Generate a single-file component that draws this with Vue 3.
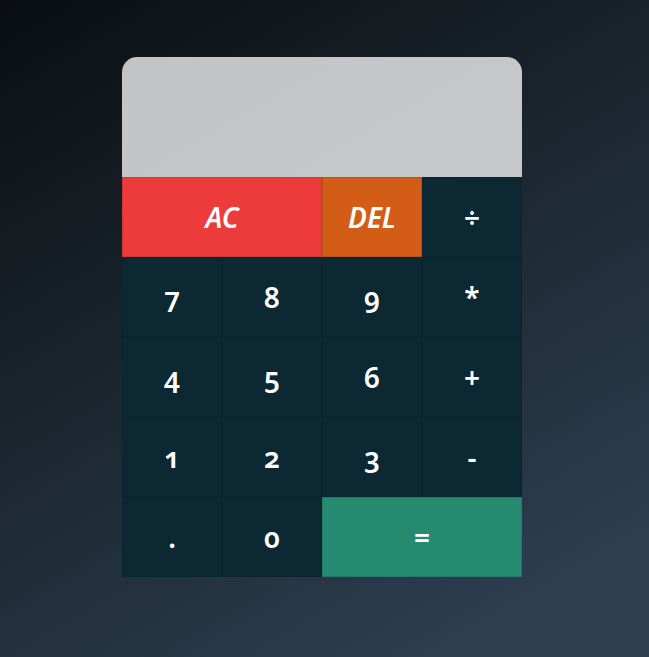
<script setup>
import { ref } from 'vue'

const keys = [
  { label: 'AC', kind: 'clear' },
  { label: 'DEL', kind: 'delete' },
  { label: '÷' },
  { label: '7' },
  { label: '8' },
  { label: '9' },
  { label: '*' },
  { label: '4' },
  { label: '5' },
  { label: '6' },
  { label: '+' },
  { label: '1' },
  { label: '2' },
  { label: '3' },
  { label: '-' },
  { label: '.' },
  { label: '0' },
  { label: '=', kind: 'equals' }
]

const expression = ref('')

function evaluate(text) {
  const tokens = text.match(/\d*\.?\d+|[÷*+-]/g) || []
  const terms = []
  let operator = '+'
  for (const token of tokens) {
    if (/^[÷*+-]$/.test(token)) {
      operator = token
      continue
    }
    const value = Number(token)
    if (operator === '*') terms.push(terms.pop() * value)
    else if (operator === '÷') terms.push(terms.pop() / value)
    else terms.push(operator === '-' ? -value : value)
  }
  return terms.length ? String(terms.reduce((a, b) => a + b, 0)) : ''
}

function press(key) {
  if (key.kind === 'clear') expression.value = ''
  else if (key.kind === 'delete') expression.value = expression.value.slice(0, -1)
  else if (key.kind === 'equals') expression.value = evaluate(expression.value)
  else expression.value += key.label
}
</script>

<template>
  <main class="page">
    <section class="calculator">
      <output class="display">{{ expression }}</output>
      <div class="keys">
        <button
          v-for="key in keys"
          :key="key.label"
          type="button"
          class="key"
          :class="key.kind"
          @click="press(key)"
        >{{ key.label }}</button>
      </div>
    </section>
  </main>
</template>

<style>
body {
  margin: 0;
  background: #2c3e50;
}
</style>

<style scoped>
.page {
  box-sizing: border-box;
  min-height: 100vh;
  padding: 57px 21px 64px 16px;
  background: linear-gradient(150deg, #0a0e11 0%, #1b252e 42%, #2c3e50 88%);
  font-family: "Noto Sans", "Open Sans", sans-serif;
}

.calculator {
  max-width: 400px;
  margin: 0 auto;
}

.display {
  display: flex;
  align-items: flex-end;
  justify-content: flex-end;
  box-sizing: border-box;
  min-height: 120px;
  padding: 16px;
  border-radius: 15px 15px 0 0;
  background: rgba(255, 255, 255, 0.75);
  color: #0c2733;
  font-size: 28px;
  font-weight: 600;
  overflow-wrap: anywhere;
}

.keys {
  display: grid;
  grid-template-columns: repeat(4, 1fr);
  grid-auto-rows: 80px;
}

.key {
  margin: 0;
  padding: 0;
  border: 1px solid rgba(17, 34, 45, 0.15);
  border-radius: 0;
  background: #0c2833;
  color: #fff;
  font-family: inherit;
  font-size: 28px;
  font-weight: 600;
  font-variant-numeric: oldstyle-nums;
  line-height: 40px;
  cursor: pointer;
}

.key:not(.clear, .delete, .equals) {
  border-color: #0c2430;
}

.clear,
.delete {
  font-style: italic;
}

.clear {
  grid-column: span 2;
  background: #ed3b3b;
}

.delete {
  background: #d35d17;
}

.equals {
  grid-column: span 2;
  background: #258a70;
}
</style>
